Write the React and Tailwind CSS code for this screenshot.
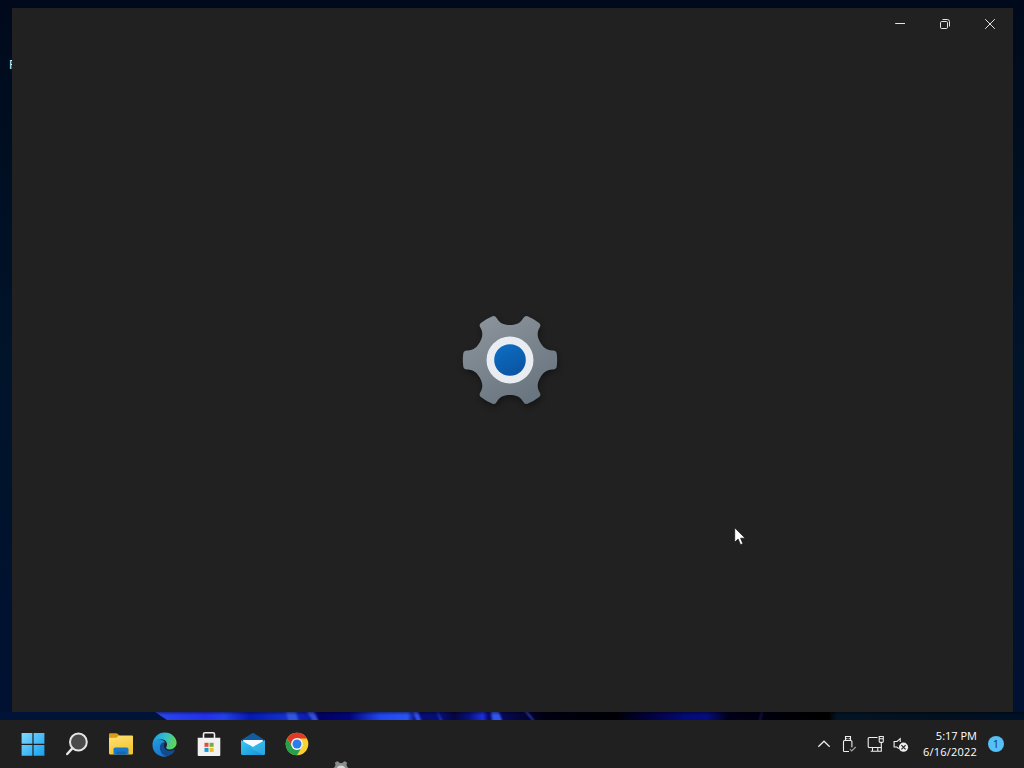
import React from "react";

function gearOutline() {
  const turn = (x, y, k) => {
    const a = (k * Math.PI) / 3;
    return `${(x * Math.cos(a) - y * Math.sin(a)).toFixed(2)} ${(x * Math.sin(a) + y * Math.cos(a)).toFixed(2)}`;
  };
  let d = "";
  for (let k = 0; k < 6; k++) {
    const p = (x, y) => turn(x, y, k);
    d += `${k ? "A 47.2 47.2 0 0 1" : "M"} ${p(-17.5, -43.8)} Q ${p(-14.6, -44.8)} ${p(-13, -41.5)} C ${p(-10, -36.2)} ${p(-5, -35)} ${p(0, -35)} C ${p(5, -35)} ${p(10, -36.2)} ${p(13, -41.5)} Q ${p(14.6, -44.8)} ${p(17.5, -43.8)} `;
  }
  return d + `A 47.2 47.2 0 0 1 ${turn(-17.5, -43.8, 6)} Z`;
}

const GEAR = gearOutline();

function SettingsGear({ id, className }) {
  return (
    <svg viewBox="-60 -60 120 120" className={className}>
      <defs>
        <linearGradient id={`${id}-body`} x1="0" y1="0" x2="0.6" y2="1">
          <stop offset="0" stopColor="#8f979e" />
          <stop offset="1" stopColor="#697580" />
        </linearGradient>
        <linearGradient id={`${id}-hub`} x1="0" y1="0" x2="0.5" y2="1">
          <stop offset="0" stopColor="#0c70c6" />
          <stop offset="1" stopColor="#0c55a4" />
        </linearGradient>
        <filter id={`${id}-shade`} x="-20%" y="-20%" width="140%" height="140%">
          <feGaussianBlur stdDeviation="3" />
        </filter>
      </defs>
      <path d={GEAR} transform="translate(1 3)" fill="#000" opacity="0.38" filter={`url(#${id}-shade)`} />
      <path d={GEAR} fill={`url(#${id}-body)`} />
      <circle r="23.5" fill="#e9edf1" />
      <circle r="15.8" fill={`url(#${id}-hub)`} />
    </svg>
  );
}

function LaunchingGear() {
  return (
    <svg viewBox="-60 -60 120 120" className="mt-[38px] size-6 shrink-0">
      <path d={GEAR} fill="#8b8d8e" />
      <circle r="23" fill="#d5d7d8" />
    </svg>
  );
}

function StartIcon() {
  return (
    <svg viewBox="0 0 24 24" className="ml-px size-6">
      <defs>
        <linearGradient id="start" gradientUnits="userSpaceOnUse" x1="0" y1="0" x2="24" y2="24">
          <stop offset="0" stopColor="#85dcff" />
          <stop offset="1" stopColor="#129ff1" />
        </linearGradient>
      </defs>
      <path fill="url(#start)" d="M1 1H11.4V11.7H.6V1ZM12.6 1H23.4V11.7H12.6ZM.6 12.9H11.4V23.8H.6ZM12.6 12.9H23.4V23.8H12.6Z" />
    </svg>
  );
}

function SearchIcon() {
  return (
    <svg viewBox="0 0 24 24" className="ml-[2px] size-6">
      <circle cx="13.4" cy="10" r="8.4" fill="#4b4b4b" stroke="#e6e6e6" strokeWidth="2" />
      <path d="M7.3 16.4 2.2 22" stroke="#e6e6e6" strokeWidth="2.4" strokeLinecap="round" />
    </svg>
  );
}

function FolderIcon() {
  return (
    <svg viewBox="0 0 26 24" className="h-6 w-[26px]">
      <defs>
        <linearGradient id="folder" x1="0" y1="0" x2="0.4" y2="1">
          <stop offset="0" stopColor="#ffe27a" />
          <stop offset="1" stopColor="#f5c52e" />
        </linearGradient>
      </defs>
      <path d="M1 2.2Q1 1.2 2 1.2H8.3Q9 1.2 9.6 1.8L11.3 3.6V8H1Z" fill="#dc9b13" />
      <path d="M1 5.7H8.4L10.7 3.5H24Q25 3.5 25 4.5V21.2Q25 22.4 23.8 22.4H2.2Q1 22.4 1 21.2Z" fill="url(#folder)" />
      <path d="M5.5 22.4V17.3Q5.5 15.5 7.3 15.5H18.7Q20.5 15.5 20.5 17.3V22.4Z" fill="#1878c9" />
      <path d="M8.3 22.4V20.3Q8.3 19.4 9.3 19.4H16.8Q17.7 19.4 17.7 20.3V22.4Z" fill="#1566b4" />
    </svg>
  );
}

function EdgeIcon() {
  return (
    <svg viewBox="0 0 24 24" className="mr-px size-[25px]">
      <defs>
        <linearGradient id="edge-top" x1="0" y1="0.3" x2="1" y2="0.5">
          <stop offset="0" stopColor="#1a9ee2" />
          <stop offset="0.48" stopColor="#31bdd1" />
          <stop offset="1" stopColor="#62d750" />
        </linearGradient>
        <linearGradient id="edge-left" x1="0" y1="0" x2="0.5" y2="1">
          <stop offset="0" stopColor="#249bdd" />
          <stop offset="1" stopColor="#1876d1" />
        </linearGradient>
      </defs>
      <path d="M.5 11.7C1.1 5 6 0.4 12.2.4 18.7.4 23.6 5.2 23.6 10.3c0 3.8-3.1 6.4-6.4 6.4-2.7 0-4-1-3.5-2 .8-1.3 1.2-3.7-.2-5.5C10.7 5.4 3.6 6.5.5 11.7Z" fill="url(#edge-top)" />
      <path d="M.5 11.5C1.7 7.3 6 6.3 9 7.4c1.8.6 3.4 1.7 4.2 3-3.5-1.4-5.7 2-5 5.6.6 4.2 3.3 6.7 6.7 7.3C7.8 25.1 0 20.4.5 11.5Z" fill="url(#edge-left)" />
      <path d="M12 10.1c-2.8 0-5 2.6-4.2 6.5.7 3.8 3.6 6.5 7.2 6.7 3.1-.7 5.8-2.9 7-5.7.2-.5-.2-.8-.7-.5-4.5 2.4-10.4.1-9.7-4.5.1-.8.6-1.6.4-2.5Z" fill="#124b91" />
    </svg>
  );
}

function StoreIcon() {
  return (
    <svg viewBox="0 0 24 26" className="mr-px h-[26px] w-6">
      <path d="M6.5 8V3.2Q6.5 1.7 8 1.7H16Q17.5 1.7 17.5 3.2V8" fill="none" stroke="#ededed" strokeWidth="1.6" />
      <path d="M.7 6.8H23.3V24Q23.3 25 22.3 25H1.7Q.7 25 .7 24Z" fill="#f1f1f1" />
      <path d="M7.5 11.8H11.5V15.8H7.5Z" fill="#e54b37" />
      <path d="M12.6 11.8H16.6V15.8H12.6Z" fill="#74ad39" />
      <path d="M7.5 16.9H11.5V20.9H7.5Z" fill="#1599d9" />
      <path d="M12.6 16.9H16.6V20.9H12.6Z" fill="#f3bb24" />
    </svg>
  );
}

function MailIcon() {
  return (
    <svg viewBox="0 0 26 24" className="h-6 w-[26px]">
      <defs>
        <linearGradient id="mail" x1="0" y1="0" x2="1" y2="1">
          <stop offset="0" stopColor="#39ccf1" />
          <stop offset="1" stopColor="#168bd5" />
        </linearGradient>
      </defs>
      <path d="M1 8.2 12.1 1.2Q13 .7 13.9 1.2L25 8.2V12H1Z" fill="#125c9d" />
      <path d="M3.2 8H22.8V13L13 18 3.2 13Z" fill="#f4faff" />
      <path d="M1 8.2 13 14.9 25 8.2V21.5Q25 23 23.5 23H2.5Q1 23 1 21.5Z" fill="url(#mail)" />
      <path d="M25 8.2 10.8 16.2 22.8 23H23.5Q25 23 25 21.5Z" fill="#45c2ec" opacity=".45" />
    </svg>
  );
}

function ChromeIcon() {
  return (
    <svg viewBox="0 0 24 24" className="size-6">
      <circle cx="12" cy="12" r="11.3" fill="#fbd02f" />
      <path d="M2.2 6.4A11.3 11.3 0 0 1 21.8 6.4H12A5.6 5.6 0 0 0 7.1 14.8Z" fill="#e2382c" />
      <path d="M2.2 6.4A11.3 11.3 0 0 0 12 23.3L16.9 14.8A5.6 5.6 0 0 1 7.1 14.8Z" fill="#25a04c" />
      <circle cx="12" cy="12" r="5.9" fill="#f7f7f7" />
      <circle cx="12" cy="12" r="4.5" fill="#2c7de9" />
    </svg>
  );
}

function TrayIcons() {
  return (
    <div className="flex h-6 items-center text-[#eeeeee]">
      <svg viewBox="0 0 14 24" className="h-6 w-3.5" fill="none" stroke="currentColor" strokeWidth="1.2">
        <path d="m1.3 14.7 5.7-5.5 5.7 5.5" />
      </svg>
      <svg viewBox="0 0 16 24" className="ml-[10px] h-6 w-4" fill="none" stroke="currentColor" strokeWidth="1.1">
        <path d="M4.5 8.5V4.5H9.5V8.5M8 19.5H3.3Q2.5 19.5 2.5 18.7V9.5Q2.5 8.5 3.5 8.5H9.9Q10.9 8.5 10.9 9.5V15.3" />
        <path d="M5.8 6V7.2M8.2 6V7.2" />
        <path d="m8.9 17.1 1.8 1.8 4-3.9" stroke="#a5a5a5" />
      </svg>
      <svg viewBox="0 0 18 24" className="ml-[10px] h-6 w-[18px]" fill="none" stroke="currentColor" strokeWidth="1.1">
        <path d="M10.5 5.5H2.2Q1.2 5.5 1.2 6.5V14.5Q1.2 15.5 2.2 15.5H14.5M5.5 15.5V19M10.8 15.5V19M3.7 19.3H13" />
        <path d="M12.2 4.5H16.3V9.3Q16.3 10.4 15.3 10.4H13.2Q12.2 10.4 12.2 9.3ZM12.2 6.8H16.3M14.3 10.4V19.3H13" />
      </svg>
      <svg viewBox="0 0 18 24" className="ml-[7px] h-6 w-[18px]">
        <path d="M8.2 10V6.7L5 9.5H2.1V15H4.8L6.8 16.6" fill="none" stroke="currentColor" strokeWidth="1.1" />
        <circle cx="11.5" cy="15.2" r="4.6" fill="#eee" />
        <path d="m9.4 13.1 4.2 4.2M13.6 13.1 9.4 17.3" stroke="#252525" strokeWidth="1.2" />
      </svg>
    </div>
  );
}

function TitleBar() {
  return (
    <div className="flex h-8 shrink-0 justify-end text-[#e4e4e4]">
      <button aria-label="Minimize" className="flex w-[45px] items-center justify-center">
        <svg viewBox="0 0 12 12" className="size-3" fill="none" stroke="currentColor">
          <path d="M1.2 5.5H11" />
        </svg>
      </button>
      <button aria-label="Restore" className="flex w-[45px] items-center justify-center">
        <svg viewBox="0 0 12 12" className="size-3" fill="none" stroke="currentColor">
          <rect x="1.5" y="3.5" width="7" height="7" rx="1.2" />
          <path d="M3.5 1.5H8.3Q10.5 1.5 10.5 3.7V8.5" />
        </svg>
      </button>
      <button aria-label="Close" className="flex w-[46px] items-center justify-center">
        <svg viewBox="0 0 12 12" className="size-3" fill="none" stroke="currentColor">
          <path d="m1.2 1.2 9.6 9.6M10.8 1.2 1.2 10.8" />
        </svg>
      </button>
    </div>
  );
}

function WallpaperStrip() {
  return (
    <svg viewBox="0 0 1024 8" className="block h-2 w-full shrink-0" preserveAspectRatio="none">
      <defs>
        <linearGradient id="bloom" gradientUnits="userSpaceOnUse" x1="154" y1="0" x2="1024" y2="0">
          <stop offset="0" stopColor="#2948ee" />
          <stop offset=".06" stopColor="#2230e8" />
          <stop offset=".08" stopColor="#2440e9" />
          <stop offset=".11" stopColor="#0519ae" />
          <stop offset=".15" stopColor="#1430c8" />
          <stop offset=".182" stopColor="#0a18a8" />
          <stop offset=".19" stopColor="#010068" />
          <stop offset=".225" stopColor="#02057a" />
          <stop offset=".26" stopColor="#2046ee" />
          <stop offset=".291" stopColor="#2854f3" />
          <stop offset=".301" stopColor="#070b72" />
          <stop offset=".33" stopColor="#050f78" />
          <stop offset=".345" stopColor="#050540" />
          <stop offset=".362" stopColor="#07117d" />
          <stop offset=".378" stopColor="#1b2fdc" />
          <stop offset=".384" stopColor="#080a70" />
          <stop offset=".42" stopColor="#04043e" />
          <stop offset=".45" stopColor="#000012" />
          <stop offset=".53" stopColor="#010006" />
          <stop offset=".57" stopColor="#020140" />
          <stop offset=".61" stopColor="#040a78" />
          <stop offset=".635" stopColor="#050c80" />
          <stop offset=".66" stopColor="#01001b" />
          <stop offset=".72" stopColor="#00000a" />
          <stop offset=".775" stopColor="#000" />
          <stop offset=".785" stopColor="#031525" />
          <stop offset=".9" stopColor="#03101f" />
          <stop offset="1" stopColor="#001027" />
        </linearGradient>
        <linearGradient id="bloom-fade" x1="0" y1="0" x2="0" y2="1">
          <stop offset="0" stopColor="#000" stopOpacity=".4" />
          <stop offset=".4" stopColor="#000" stopOpacity="0" />
        </linearGradient>
        <filter id="bloom-soften" filterUnits="userSpaceOnUse" x="0" y="0" width="1024" height="8">
          <feGaussianBlur stdDeviation="1 0" />
        </filter>
      </defs>
      <path d="M0 0H1024V8H0Z" fill="#011336" />
      <path d="M155 0H1024V8H167Z" fill="url(#bloom)" />
      <g filter="url(#bloom-soften)">
        <path d="M286 0H296L298 8H288Z" fill="#3355df" />
        <path d="M307 0H314L318 8H312Z" fill="#3150d3" />
        <path d="M413 0H418L421 8H416Z" fill="#344ff0" />
        <path d="M437 0H438L442 8H440Z" fill="#263dba" />
        <path d="M491 0H499L502 8H492Z" fill="#3154eb" />
        <path d="M525 0H528L534 8H532Z" fill="#283aaf" />
        <path d="M761 0H763L761 8H759Z" fill="#17134d" />
      </g>
      <path d="M154 0H1024V8H166Z" fill="url(#bloom-fade)" />
    </svg>
  );
}

export default function App() {
  return (
    <div className="relative flex h-[768px] w-[1024px] flex-col overflow-hidden bg-[#202020] font-['Open_Sans','Noto_Sans',sans-serif] select-none">
      <main className="relative flex h-[720px] shrink-0 flex-col bg-linear-to-b from-[#000a1c] via-[#00142a] via-50% to-[#001132] pt-2">
        <span className="absolute top-[57px] left-[9px] text-[12px] leading-4 text-white">F</span>
        <section className="relative mr-[11px] ml-3 flex h-[704px] flex-col bg-[#212121]">
          <TitleBar />
          <div className="flex flex-1 justify-center">
            <SettingsGear id="splash" className="mt-[260px] mr-[5px] size-[120px]" />
          </div>
        </section>
        <WallpaperStrip />
      </main>
      <footer className="flex h-12 shrink-0 items-center overflow-hidden bg-[#202020]">
        <nav className="ml-[10px] flex h-12">
          <div className="flex w-11 items-center justify-center"><StartIcon /></div>
          <div className="flex w-11 items-center justify-center"><SearchIcon /></div>
          <div className="flex w-[45px] items-center justify-center"><FolderIcon /></div>
          <div className="flex w-11 items-center justify-center"><EdgeIcon /></div>
          <div className="flex w-11 items-center justify-center"><StoreIcon /></div>
          <div className="flex w-11 items-center justify-center"><MailIcon /></div>
          <div className="flex w-11 items-center justify-center"><ChromeIcon /></div>
          <div className="flex w-11 items-start justify-center"><LaunchingGear /></div>
        </nav>
        <div className="ml-auto flex items-center">
          <TrayIcons />
          <div className="ml-[13px] w-[54px] text-right text-[11px] leading-4 whitespace-nowrap text-white">
            <div>5:17 PM</div>
            <div className="tracking-[0.2px]">6/16/2022</div>
          </div>
          <div className="mr-5 ml-[11px] flex size-4 items-center justify-center rounded-full bg-[#55c0f5] text-[11px] leading-4 text-[#17384c]">1</div>
        </div>
      </footer>
      <svg viewBox="0 0 12 19" className="absolute top-[527px] left-[734px] h-[19px] w-3">
        <path d="M.7.8V15.3L4.1 12 6.5 17.7 8.9 16.7 6.6 11.2H11.2Z" fill="#fff" stroke="#111" strokeWidth=".7" />
      </svg>
    </div>
  );
}
